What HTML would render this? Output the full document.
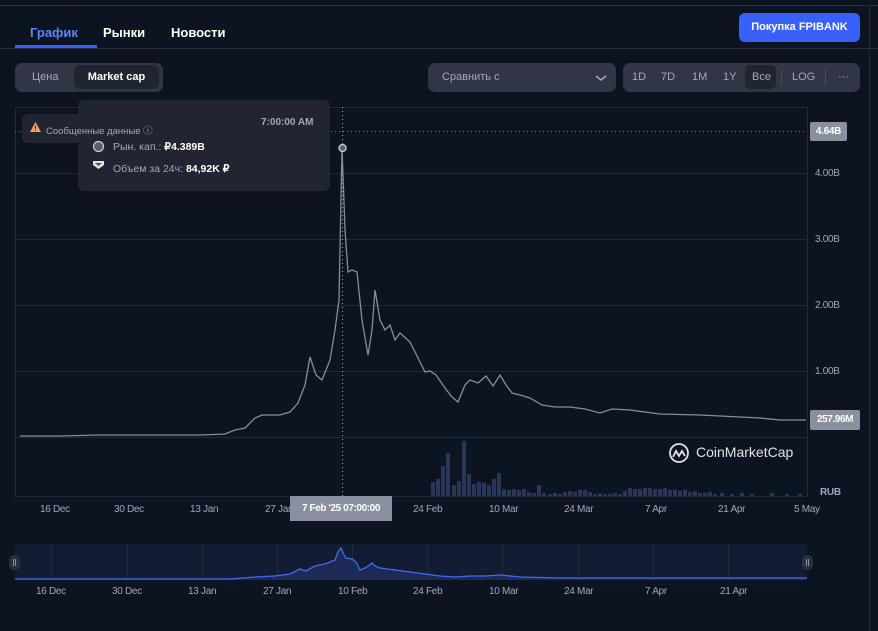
<!DOCTYPE html>
<html><head><meta charset="utf-8"><style>
*{margin:0;padding:0;box-sizing:border-box}
body{width:878px;height:626px;background:#0d1421;font-family:"Liberation Sans",sans-serif;color:#fff;position:relative;overflow:hidden}
.a{position:absolute}
.tab{font-size:13px;font-weight:bold;top:25px}
.lab{font-size:10.5px;color:#a1a7bb}
.ax{font-size:10px;color:#a1a7bb;letter-spacing:-0.3px}
</style></head><body>
<div class="a" style="left:0;top:5px;width:878px;height:1px;background:#2a3040"></div>
<div class="a" style="left:0;top:48px;width:878px;height:1px;background:#2a3040"></div>
<div class="a" style="left:869px;top:5px;width:1px;height:626px;background:#222837"></div>
<div class="a tab" style="left:30px;color:#5b86f7">График</div>
<div class="a" style="left:15px;top:45px;width:82px;height:3px;background:#3861fb"></div>
<div class="a tab" style="left:103px">Рынки</div>
<div class="a tab" style="left:171px">Новости</div>
<div class="a" style="left:739px;top:13px;width:121px;height:29px;background:#3861fb;border-radius:6px;font-size:11px;font-weight:bold;text-align:center;line-height:29px">Покупка FPIBANK</div>

<div class="a" style="left:15px;top:63px;width:148px;height:29px;background:#323546;border-radius:7px"></div>
<div class="a lab" style="left:32px;top:71px;font-size:11px">Цена</div>
<div class="a" style="left:74px;top:65px;width:85px;height:24px;background:#222531;border-radius:6px;font-size:11px;font-weight:bold;text-align:center;line-height:24px">Market cap</div>

<div class="a" style="left:428px;top:63px;width:188px;height:29px;background:#323546;border-radius:7px"></div>
<div class="a lab" style="left:442px;top:71px;font-size:11px">Сравнить с</div>
<svg class="a" style="left:595px;top:73px" width="12" height="10"><path d="M1 3l5 4 5-4" stroke="#a1a7bb" stroke-width="1.5" fill="none"/></svg>
<div class="a" style="left:623px;top:63px;width:237px;height:29px;background:#323546;border-radius:7px"></div>
<div class="a" style="left:745px;top:65px;width:31px;height:24px;background:#222531;border-radius:5px"></div>
<div class="a lab" style="left:632px;top:71px;font-size:11px">1D</div>
<div class="a lab" style="left:661px;top:71px;font-size:11px">7D</div>
<div class="a lab" style="left:692px;top:71px;font-size:11px">1M</div>
<div class="a lab" style="left:723px;top:71px;font-size:11px">1Y</div>
<div class="a lab" style="left:752px;top:71px;font-size:11px">Все</div>
<div class="a" style="left:781px;top:70px;width:1px;height:15px;background:#4a4f60"></div>
<div class="a lab" style="left:792px;top:71px;font-size:11px">LOG</div>
<div class="a" style="left:825px;top:70px;width:1px;height:15px;background:#4a4f60"></div>
<div class="a lab" style="left:838px;top:71px;font-size:11px">···</div>

<svg class="a" style="left:0;top:0" width="878" height="626">
<g stroke="#222837" stroke-width="1">
<line x1="15" y1="107.5" x2="807" y2="107.5"/>
<line x1="15" y1="173.5" x2="807" y2="173.5"/>
<line x1="15" y1="239.5" x2="807" y2="239.5"/>
<line x1="15" y1="305.5" x2="807" y2="305.5"/>
<line x1="15" y1="371.5" x2="807" y2="371.5"/>
<line x1="15" y1="437.5" x2="807" y2="437.5"/>
<line x1="15" y1="496.5" x2="807" y2="496.5"/>
<line x1="15.5" y1="107" x2="15.5" y2="496"/>
<line x1="807.5" y1="107" x2="807.5" y2="496"/>
</g>
<line x1="15" y1="131.5" x2="807" y2="131.5" stroke="#7a8093" stroke-dasharray="1,3"/>
<line x1="342.5" y1="107" x2="342.5" y2="496" stroke="#a0a6b8" stroke-dasharray="1,3"/>
<g fill="#2a3558">
<rect x="431" y="482" width="4" height="14"/><rect x="436" y="479" width="4" height="17"/><rect x="441" y="466" width="4" height="30"/><rect x="446" y="453" width="4" height="43"/><rect x="452" y="485" width="4" height="11"/><rect x="457" y="481" width="4" height="15"/><rect x="462" y="441" width="4" height="55"/><rect x="467" y="474" width="4" height="22"/><rect x="472" y="484" width="4" height="12"/><rect x="477" y="482" width="4" height="14"/><rect x="482" y="483" width="4" height="13"/><rect x="487" y="485" width="4" height="11"/><rect x="492" y="479" width="4" height="17"/><rect x="497" y="473" width="4" height="23"/><rect x="502" y="489" width="4" height="7"/><rect x="507" y="490" width="4" height="6"/><rect x="512" y="489" width="4" height="7"/><rect x="517" y="490" width="4" height="6"/><rect x="522" y="489" width="4" height="7"/><rect x="527" y="492" width="4" height="4"/><rect x="532" y="493" width="4" height="3"/><rect x="537" y="485" width="4" height="11"/>
<rect x="542" y="493" width="4" height="3"/><rect x="548" y="494" width="4" height="2"/><rect x="553" y="493" width="4" height="3"/><rect x="558" y="494" width="4" height="2"/><rect x="563" y="492" width="4" height="4"/><rect x="568" y="491" width="4" height="5"/><rect x="573" y="492" width="4" height="4"/><rect x="578" y="490" width="4" height="6"/><rect x="583" y="490" width="4" height="6"/><rect x="588" y="492" width="4" height="4"/><rect x="593" y="494" width="4" height="2"/><rect x="598" y="493" width="4" height="3"/><rect x="603" y="494" width="4" height="2"/>
<rect x="608" y="494" width="4" height="2"/><rect x="613" y="493" width="4" height="3"/><rect x="618" y="494" width="4" height="2"/><rect x="623" y="491" width="4" height="5"/><rect x="628" y="488" width="4" height="8"/><rect x="633" y="489" width="4" height="7"/><rect x="638" y="489" width="4" height="7"/><rect x="643" y="488" width="4" height="8"/><rect x="648" y="488" width="4" height="8"/><rect x="653" y="489" width="4" height="7"/><rect x="658" y="489" width="4" height="7"/><rect x="663" y="488" width="4" height="8"/><rect x="668" y="490" width="4" height="6"/><rect x="673" y="490" width="4" height="6"/><rect x="678" y="491" width="4" height="5"/><rect x="683" y="490" width="4" height="6"/><rect x="688" y="492" width="4" height="4"/><rect x="693" y="491" width="4" height="5"/><rect x="698" y="493" width="4" height="3"/><rect x="703" y="493" width="4" height="3"/><rect x="708" y="492" width="4" height="4"/><rect x="713" y="494" width="4" height="2"/><rect x="720" y="493" width="4" height="3"/><rect x="730" y="494" width="4" height="2"/><rect x="740" y="493" width="4" height="3"/><rect x="750" y="494" width="4" height="2"/><rect x="770" y="493" width="4" height="3"/><rect x="785" y="494" width="4" height="2"/><rect x="798" y="494" width="4" height="2"/>
</g>
<polyline fill="none" stroke="#878c99" stroke-width="1.3" points="20,436 60,436 100,435 150,435 200,435 225,434 235,430 245,428 255,418 262,415 280,415 290,412 298,403 305,385 310,357 316,375 322,380 330,360 335,330 339,300 342,148 345,230 348,272 352,270 357,272 362,320 368,355 372,330 375,290 380,320 385,330 390,325 395,340 400,333 410,342 418,358 425,372 430,371 436,375 445,388 452,397 458,402 465,385 470,380 478,383 486,376 493,386 500,375 506,385 512,393 520,395 530,398 542,405 555,407 570,407 585,409 600,413 612,409 630,410 660,414 700,415 720,416 760,418 780,420 806,420"/>
<circle cx="342.5" cy="148" r="3.5" fill="#5a5f6e" stroke="#d0d3dc" stroke-width="1.3"/>
<rect x="15" y="544" width="792" height="36" fill="#141c34"/>
<g stroke="#222a40"><line x1="51.5" y1="544" x2="51.5" y2="580"/><line x1="127.5" y1="544" x2="127.5" y2="580"/><line x1="202.5" y1="544" x2="202.5" y2="580"/><line x1="277.5" y1="544" x2="277.5" y2="580"/><line x1="352.5" y1="544" x2="352.5" y2="580"/><line x1="427.5" y1="544" x2="427.5" y2="580"/><line x1="502.5" y1="544" x2="502.5" y2="580"/><line x1="578.5" y1="544" x2="578.5" y2="580"/><line x1="653.5" y1="544" x2="653.5" y2="580"/><line x1="728.5" y1="544" x2="728.5" y2="580"/></g>
<polygon fill="#1c2a55" points="15,580 15,579 230,579 255,577 275,576 290,574 300,569 306,571 315,566 325,564 335,560 338,552 341,548 344,555 346,558 352,559 356,562 360,570 365,568 368,566 372,563 375,566 380,568 395,570 410,572 425,574 440,576 455,577 470,576 485,576 500,575 520,577 560,578 640,578 807,578 807,580"/>
<polyline fill="none" stroke="#3d6bf5" stroke-width="1.3" points="15,579 230,579 255,577 275,576 290,574 300,569 306,571 315,566 325,564 335,560 338,552 341,548 344,555 346,558 352,559 356,562 360,570 365,568 368,566 372,563 375,566 380,568 395,570 410,572 425,574 440,576 455,577 470,576 485,576 500,575 520,577 560,578 640,578 807,578"/>
<rect x="9" y="555" width="11" height="15" rx="5" fill="#2a2f3d"/><rect x="802" y="555" width="11" height="15" rx="5" fill="#2a2f3d"/>
<g stroke="#8a90a0"><line x1="13.5" y1="559" x2="13.5" y2="566"/><line x1="15.5" y1="559" x2="15.5" y2="566"/><line x1="806.5" y1="559" x2="806.5" y2="566"/><line x1="808.5" y1="559" x2="808.5" y2="566"/></g>
<circle cx="679" cy="453" r="9" fill="none" stroke="#e0e2e8" stroke-width="1.8"/>
<path d="M673 457l3-6 3 5 3-5 3 5" fill="none" stroke="#e0e2e8" stroke-width="1.8"/>
</svg>
<div class="a" style="left:696px;top:444px;font-size:14px;color:#e0e2e8">CoinMarketCap</div>

<div class="a" style="left:810px;top:122px;width:37px;height:19px;background:#8a90a0;border-radius:2px;font-size:10px;font-weight:bold;text-align:center;line-height:19px;letter-spacing:-0.3px">4.64B</div>
<div class="a ax" style="left:815px;top:168px">4.00B</div>
<div class="a ax" style="left:815px;top:234px">3.00B</div>
<div class="a ax" style="left:815px;top:300px">2.00B</div>
<div class="a ax" style="left:815px;top:366px">1.00B</div>
<div class="a" style="left:810px;top:410px;width:50px;height:20px;background:#8a90a0;border-radius:2px;font-size:10px;font-weight:bold;text-align:center;line-height:20px;letter-spacing:-0.4px">257.96M</div>
<div class="a ax" style="left:820px;top:487px;font-weight:bold">RUB</div>

<div class="a ax" style="left:40px;top:504px">16 Dec</div>
<div class="a ax" style="left:114px;top:504px">30 Dec</div>
<div class="a ax" style="left:190px;top:504px">13 Jan</div>
<div class="a ax" style="left:265px;top:504px">27 Jan</div>
<div class="a ax" style="left:413px;top:504px">24 Feb</div>
<div class="a ax" style="left:489px;top:504px">10 Mar</div>
<div class="a ax" style="left:564px;top:504px">24 Mar</div>
<div class="a ax" style="left:645px;top:504px">7 Apr</div>
<div class="a ax" style="left:718px;top:504px">21 Apr</div>
<div class="a ax" style="left:794px;top:504px">5 May</div>
<div class="a" style="left:290px;top:496px;width:102px;height:25px;background:#8a90a0;font-size:10px;font-weight:bold;text-align:center;line-height:25px;letter-spacing:-0.4px">7 Feb '25 07:00:00</div>

<div class="a ax" style="left:36px;top:586px">16 Dec</div>
<div class="a ax" style="left:112px;top:586px">30 Dec</div>
<div class="a ax" style="left:188px;top:586px">13 Jan</div>
<div class="a ax" style="left:263px;top:586px">27 Jan</div>
<div class="a ax" style="left:338px;top:586px">10 Feb</div>
<div class="a ax" style="left:413px;top:586px">24 Feb</div>
<div class="a ax" style="left:489px;top:586px">10 Mar</div>
<div class="a ax" style="left:564px;top:586px">24 Mar</div>
<div class="a ax" style="left:645px;top:586px">7 Apr</div>
<div class="a ax" style="left:720px;top:586px">21 Apr</div>

<div class="a" style="left:78px;top:100px;width:252px;height:91px;background:#222531;border-radius:6px"></div>
<div class="a" style="left:22px;top:114px;width:100px;height:29px;background:#222531;border-radius:5px"></div>
<svg class="a" style="left:29px;top:121px" width="13" height="12"><path d="M6.5 1L12 11H1z" fill="#f0a060"/><rect x="6" y="4.5" width="1" height="3.5" fill="#222531"/><rect x="6" y="9" width="1" height="1" fill="#222531"/></svg>
<div class="a" style="left:46px;top:123px;font-size:9.5px;color:#a1a7bb">Сообщенные данные ⓘ</div>
<div class="a" style="left:261px;top:117px;font-size:10px;color:#a1a7bb;font-weight:bold">7:00:00 AM</div>
<svg class="a" style="left:92px;top:140px" width="14" height="40"><circle cx="6.5" cy="6.5" r="5" fill="#5a5f6e" stroke="#c8ccd6" stroke-width="1.2"/><path d="M1 21h11v4l-5.5 4L1 25z" fill="#e0e2e8"/><path d="M3 23h7l-3.5 3z" fill="#4a4f60"/></svg>
<div class="a" style="left:113px;top:141px;font-size:10.5px;color:#a1a7bb">Рын. кап.: <b style="color:#fff">₽4.389B</b></div>
<div class="a" style="left:113px;top:163px;font-size:10.5px;color:#a1a7bb">Объем за 24ч: <b style="color:#fff">84,92K ₽</b></div>
</body></html>
